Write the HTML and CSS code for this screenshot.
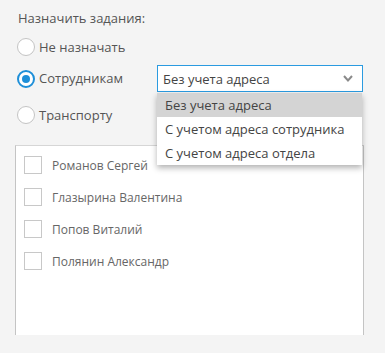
FILE: index.html
```html
<!DOCTYPE html>
<html lang="ru">
<head>
    <meta charset="UTF-8">
    <title>Назначить задания</title>
    <link rel="stylesheet" href="styles.css">
</head>
<body>

<div class="panel">
    <div class="title">Назначить задания:</div>

    <div class="radio-row row-first">
        <span class="radio"></span>
        <span class="radio-label">Не назначать</span>
    </div>

    <div class="radio-row row-select">
        <span class="radio checked"></span>
        <span class="radio-label">Сотрудникам</span>
        <div class="select-wrap">
            <div class="select">
                <span>Без учета адреса</span>
                <svg class="arrow" width="10" height="7" viewBox="0 0 10 7">
                    <path d="M1 1 L5 5.5 L9 1" fill="none" stroke="#8a8a8a" stroke-width="2"/>
                </svg>
            </div>
            <ul class="dropdown">
                <li class="active">Без учета адреса</li>
                <li>С учетом адреса сотрудника</li>
                <li>С учетом адреса отдела</li>
            </ul>
        </div>
    </div>

    <div class="radio-row row-last">
        <span class="radio"></span>
        <span class="radio-label">Транспорту</span>
    </div>

    <div class="list-box">
        <div class="check-row"><span class="checkbox"></span>Романов Сергей</div>
        <div class="check-row"><span class="checkbox"></span>Глазырина Валентина</div>
        <div class="check-row"><span class="checkbox"></span>Попов Виталий</div>
        <div class="check-row"><span class="checkbox"></span>Полянин Александр</div>
    </div>
</div>

</body>
</html>
```

FILE: styles.css
```css
body {
    margin: 0;
    background-color: #f4f4f4;
    font-family: 'Open Sans', 'Liberation Sans', sans-serif;
    font-size: 13px;
    color: #555;
}

.panel {
    padding: 8px 0 0 17px;
}

.title {
    line-height: 20px;
    padding-left: 1px;
}

.radio-row {
    display: flex;
    align-items: center;
}

.row-first {
    height: 22px;
    margin-top: 8px;
}

.row-select {
    height: 27px;
    margin-top: 7px;
}

.row-select .radio-label {
    margin-top: -2px;
}

.row-last {
    height: 22px;
    margin-top: 12px;
}

.radio {
    width: 16px;
    height: 16px;
    border: 1px solid #c4c4c4;
    border-radius: 50%;
    background-color: #fff;
    position: relative;
    flex-shrink: 0;
}

.radio.checked {
    border: 2px solid #1e8fd8;
    width: 14px;
    height: 14px;
}

.radio.checked::after {
    content: '';
    position: absolute;
    top: 3px;
    left: 3px;
    width: 8px;
    height: 8px;
    border-radius: 50%;
    background-color: #1e8fd8;
}

.radio-label {
    margin-left: 4px;
    width: 118px;
}

.select-wrap {
    position: relative;
}

.select {
    width: 199px;
    height: 25px;
    border: 1px solid #2b9be0;
    background-color: #fff;
    display: flex;
    align-items: center;
    justify-content: space-between;
    padding-left: 5px;
    color: #444;
}

.arrow {
    margin-right: 9px;
}

.dropdown {
    position: absolute;
    top: 28px;
    left: 0;
    width: 205px;
    margin: 0;
    padding: 0;
    list-style: none;
    background-color: #fff;
    box-shadow: 0 3px 6px rgba(0, 0, 0, 0.3);
    z-index: 2;
    color: #444;
}

.dropdown li {
    height: 24px;
    line-height: 24px;
    padding-left: 8px;
}

.dropdown li.active {
    background-color: #d4d4d4;
}

.list-box {
    width: 339px;
    height: 186px;
    margin-top: 19px;
    margin-left: -2px;
    background-color: #fff;
    border: 1px solid #d6d6d6;
    border-left-color: #c4c4c4;
    border-right-color: #c4c4c4;
    border-bottom: none;
    padding: 3px 0 0 8px;
    font-size: 12px;
}

.check-row {
    display: flex;
    align-items: center;
    height: 32px;
    color: #666;
}

.checkbox {
    width: 16px;
    height: 16px;
    border: 1px solid #c8c8c8;
    background-color: #fff;
    margin-right: 10px;
    flex-shrink: 0;
}
```
